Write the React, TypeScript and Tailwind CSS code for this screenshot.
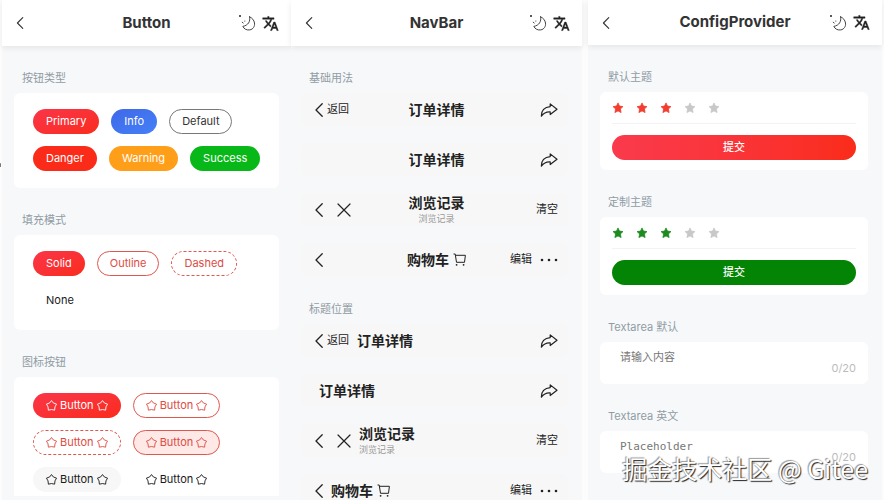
import type { ReactNode } from "react";

const STAR_PATH =
  "M12 1.8 15 8.200 22 9.100 16.900 14 18.200 21.200 12 17.800 5.800 21.200 7.100 14 2 9.100 9 8.200Z";

function BackIcon({ className }: { className: string }) {
  return (
    <svg viewBox="0 0 8 14" className={className} fill="none" stroke="currentColor" strokeWidth="1.3" strokeLinecap="round" strokeLinejoin="round">
      <path d="M7.2 0.8 1 7l6.2 6.2" />
    </svg>
  );
}

function MoonIcon() {
  return (
    <svg viewBox="0 0 18 18" className="size-[18px]" fill="none" stroke="#444" strokeWidth="1" strokeLinecap="round" strokeLinejoin="round">
      <path d="M11.600 2.800c1 4.600-1.400 8.600-6.800 9.600 1.300 2.600 3.900 4 7 3.500 3.300-.6 5.200-3.600 4.700-6.900-.4-2.700-2.300-5.200-4.900-6.200Z" />
      <circle cx="2" cy="2" r="1" fill="#222" stroke="none" />
      <path d="M6.800 7v.2M4.200 8.200l1 .8" />
    </svg>
  );
}

function TranslateIcon() {
  return (
    <svg viewBox="0 0 24 24" className="size-[17px]" fill="#222" stroke="#222" strokeWidth=".6">
      <path d="m12.870 15.070-2.540-2.510.03-.03A17.520 17.520 0 0 0 14.070 6H17V4h-7V2H8v2H1v2h11.170C11.500 7.920 10.440 9.750 9 11.350 8.070 10.320 7.300 9.190 6.690 8h-2c.73 1.630 1.730 3.170 2.980 4.560l-5.090 5.020L4 19l5-5 3.110 3.110.76-2.040zM18.500 10h-2L12 22h2l1.120-3h4.750L21 22h2l-4.500-12zm-2.620 7 1.620-4.330L19.120 17h-3.240z" />
    </svg>
  );
}

function ShareIcon() {
  return (
    <svg viewBox="0 0 18 14" className="h-3.5 w-[18px]" fill="none" stroke="currentColor" strokeWidth="1.2" strokeLinejoin="round">
      <path d="M10.200 .9 17 6.200 10.200 11.500V8.900C6.600 8.600 3.800 9.800 1.400 13.200 1.200 7.800 4.400 4 10.200 3.600Z" />
    </svg>
  );
}

function CloseIcon() {
  return (
    <svg viewBox="0 0 14 14" className="size-3.5" fill="none" stroke="currentColor" strokeWidth="1.2" strokeLinecap="round">
      <path d="m1 1 12 12M13 1 1 13" />
    </svg>
  );
}

function CartIcon() {
  return (
    <svg viewBox="0 0 13 13" className="size-[13px]" fill="none" stroke="currentColor" strokeWidth="1" strokeLinejoin="round">
      <path d="M.5 1h1.700l1.300 8.300h8L12.400 2.300H2.600" />
      <circle cx="3.600" cy="11.800" r=".9" fill="currentColor" stroke="none" />
      <circle cx="10.600" cy="11.800" r=".9" fill="currentColor" stroke="none" />
    </svg>
  );
}

function MoreIcon() {
  return (
    <svg viewBox="0 0 18 4" className="h-1 w-[18px]" fill="currentColor">
      <circle cx="2" cy="2" r="1.300" />
      <circle cx="9" cy="2" r="1.300" />
      <circle cx="16" cy="2" r="1.300" />
    </svg>
  );
}

// wide-bodied star, closer to a pentagon than a sharp five-pointer
function StarOutline() {
  return (
    <svg viewBox="0 0 12 12" className="size-[11px]" fill="none" stroke="currentColor" strokeWidth="1" strokeLinejoin="round">
      <path d="M6 .6 8 3.200 11.500 4.500 9.800 7.500 9.400 11.100 6 10.400 2.600 11.100 2.200 7.500 .5 4.500 4 3.200Z" />
    </svg>
  );
}

type PanelProps = { title: string; headerClass: string; bodyClass: string; children: ReactNode };

function Panel({ title, headerClass, bodyClass, children }: PanelProps) {
  return (
    <section className="min-w-0 bg-[#f7f8fa]">
      <header className={`grid grid-cols-[1fr_auto_1fr] items-center bg-white pr-3 pl-3 shadow-[0_2px_6px_rgba(0,0,0,0.08)] ${headerClass}`}>
        <button type="button" aria-label="Back" className="justify-self-start p-0.5 text-[#333]">
          <BackIcon className="h-3 w-2" />
        </button>
        <h1 className="text-[15px] font-bold text-[#333]">{title}</h1>
        <div className="flex items-center gap-1.5 justify-self-end">
          <button type="button" aria-label="Dark mode">
            <MoonIcon />
          </button>
          <button type="button" aria-label="Language">
            <TranslateIcon />
          </button>
        </div>
      </header>
      <div className={bodyClass}>{children}</div>
    </section>
  );
}

function Label({ children }: { children: ReactNode }) {
  return <h2 className="px-2 pt-[23px] pb-1.5 text-[11px] leading-[18px] text-[#909ca4]">{children}</h2>;
}

const pill = "flex h-[25px] items-center gap-[3px] rounded-full text-[11px] leading-none";
const redGradient = "px-[13px] bg-linear-to-br from-[#fa3547] to-[#fa2c19] text-white";
const redOutline = "px-3 border border-[#e0574f] text-[#dd4b43]";

function Pill({ className, children }: { className: string; children: ReactNode }) {
  return (
    <button type="button" className={`${pill} ${className}`}>
      {children}
    </button>
  );
}

function IconPill({ className }: { className: string }) {
  return (
    <button type="button" className={`${pill} ${className}`}>
      <StarOutline />
      Button
      <StarOutline />
    </button>
  );
}

function ButtonCard({ children }: { children: ReactNode }) {
  return <div className="flex flex-wrap gap-3 rounded-md bg-white pt-4 pr-3 pb-[17px] pl-[19px]">{children}</div>;
}

function ButtonPanel() {
  return (
    <Panel title="Button" headerClass="h-[46px]" bodyClass="px-3">
      <Label>按钮类型</Label>
      <ButtonCard>
        <Pill className={redGradient}>Primary</Pill>
        <Pill className="bg-linear-to-br from-[#4068e8] to-[#4480f8] px-[13px] text-white">Info</Pill>
        <Pill className="border border-[#777] px-3 text-[#333]">Default</Pill>
        <Pill className="bg-[#fa2c19] px-[13px] text-white">Danger</Pill>
        <Pill className="bg-[#ff9e18] px-[13px] text-white">Warning</Pill>
        <Pill className="bg-[#08b818] px-[13px] text-white">Success</Pill>
      </ButtonCard>
      <Label>填充模式</Label>
      <ButtonCard>
        <Pill className={redGradient}>Solid</Pill>
        <Pill className={redOutline}>Outline</Pill>
        <Pill className={`${redOutline} border-dashed`}>Dashed</Pill>
        <Pill className="px-[13px] text-[#1a1a1a]">None</Pill>
      </ButtonCard>
      <Label>图标按钮</Label>
      <div className="grid grid-cols-[max-content_max-content] gap-3 rounded-t-md bg-white pt-4 pr-3 pb-1 pl-[19px]">
        <IconPill className={redGradient} />
        <IconPill className={redOutline} />
        <IconPill className={`${redOutline} border-dashed`} />
        <IconPill className={`${redOutline} bg-[#ffe9e7]`} />
        <IconPill className="bg-[#f7f7f7] px-[13px] text-[#1a1a1a]" />
        <IconPill className="px-[13px] text-[#1a1a1a]" />
      </div>
    </Panel>
  );
}

type BarProps = {
  back?: boolean;
  backText?: string;
  close?: boolean;
  title: string;
  subtitle?: string;
  cart?: boolean;
  right: "share" | "clear" | "edit";
  titleLeft?: boolean;
};

function Bar({ back, backText, close, title, subtitle, cart, right, titleLeft }: BarProps) {
  return (
    <div
      className={`grid h-[33px] items-center rounded-md bg-[#f7f7f7] pr-2.5 pl-3.5 text-[11px] text-[#222] ${
        titleLeft ? "grid-cols-[auto_1fr_auto]" : "grid-cols-[1fr_auto_1fr]"
      }`}
    >
      <div className="flex items-center">
        {back && (
          <button type="button" aria-label="Back" className="flex items-center gap-1">
            <BackIcon className="h-3.5 w-2" />
            {backText}
          </button>
        )}
        {close && (
          <button type="button" aria-label="Close" className="ml-3.5">
            <CloseIcon />
          </button>
        )}
      </div>
      <div className={titleLeft ? (back ? "pl-2" : "pl-1") : "text-center"}>
        <div className="flex items-center gap-1 text-sm leading-[18px] font-bold">
          {title}
          {cart && <CartIcon />}
        </div>
        {subtitle && <div className="text-[9px] leading-[13px] text-[#999]">{subtitle}</div>}
      </div>
      <div className="flex items-center gap-2 justify-self-end">
        {right === "share" && (
          <button type="button" aria-label="Share">
            <ShareIcon />
          </button>
        )}
        {right === "clear" && <button type="button">清空</button>}
        {right === "edit" && (
          <>
            <button type="button">编辑</button>
            <button type="button" aria-label="More">
              <MoreIcon />
            </button>
          </>
        )}
      </div>
    </div>
  );
}

function BarList({ titleLeft }: { titleLeft?: boolean }) {
  return (
    <div className="flex flex-col gap-[17px] pb-px">
      <Bar back backText="返回" title="订单详情" right="share" titleLeft={titleLeft} />
      <Bar title="订单详情" right="share" titleLeft={titleLeft} />
      <Bar back close title="浏览记录" subtitle="浏览记录" right="clear" titleLeft={titleLeft} />
      <Bar back title="购物车" cart right="edit" titleLeft={titleLeft} />
    </div>
  );
}

function NavBarPanel() {
  return (
    <Panel title="NavBar" headerClass="h-[46px]" bodyClass="pl-2.5 pr-3.5">
      <Label>基础用法</Label>
      <BarList />
      <Label>标题位置</Label>
      <BarList titleLeft />
    </Panel>
  );
}

function RateCard({ starClass, buttonClass }: { starClass: string; buttonClass: string }) {
  return (
    <div className="rounded-md bg-white px-3 pb-2.5">
      <div className="flex h-8 items-center gap-3 border-b border-[#f2f3f5]">
        {[1, 2, 3, 4, 5].map((n) => (
          <button key={n} type="button" aria-label={`${n}`} className={n <= 3 ? starClass : "text-[#c8c8c8]"}>
            <svg viewBox="0 0 24 24" className="size-3" fill="currentColor" stroke="currentColor" strokeWidth="1.500" strokeLinejoin="round">
              <path d={STAR_PATH} />
            </svg>
          </button>
        ))}
      </div>
      <button type="button" className={`mt-[11px] h-[25px] w-full rounded-full text-[11px] font-medium text-white ${buttonClass}`}>
        提交
      </button>
    </div>
  );
}

function TextareaCard({ placeholder, label }: { placeholder: string; label: string }) {
  return (
    <div className="flex h-[42px] items-end rounded-md bg-white pr-3 pb-2 pl-5">
      <textarea
        aria-label={label}
        placeholder={placeholder}
        className="h-[26px] min-w-0 flex-1 resize-none font-[DejaVu_Sans_Mono,Noto_Sans_CJK_SC,monospace] text-[11px] leading-4 outline-none placeholder:text-[#777]"
      />
      <span className="text-[11px] leading-4 text-[#bbb]">0/20</span>
    </div>
  );
}

function ConfigPanel() {
  return (
    <Panel title="ConfigProvider" headerClass="h-[45px]" bodyClass="pl-3 pr-3.5">
      <Label>默认主题</Label>
      <RateCard starClass="text-[#f23d30]" buttonClass="bg-linear-to-r from-[#fa3a4c] to-[#fa2c19]" />
      <Label>定制主题</Label>
      <RateCard starClass="text-[#1f8a1f]" buttonClass="bg-[#048404]" />
      <Label>Textarea 默认</Label>
      <TextareaCard label="Textarea 默认" placeholder="请输入内容" />
      <Label>Textarea 英文</Label>
      <TextareaCard label="Textarea 英文" placeholder="Placeholder" />
    </Panel>
  );
}

export default function App() {
  return (
    <main className="relative h-screen overflow-hidden bg-[#fcfcfd] pl-0.5 font-[Inter,Noto_Sans_CJK_SC,sans-serif]">
      <div className="grid min-h-full grid-cols-[289fr_291fr_6fr_294fr_2fr]">
        <ButtonPanel />
        <NavBarPanel />
        <div />
        <ConfigPanel />
      </div>
      <span className="absolute top-[163px] left-0 h-1 w-px rounded-full bg-[#777]" />
      <p className="absolute right-4 bottom-3 font-[Noto_Sans_CJK_SC,sans-serif] text-[25px] leading-10 text-white [text-shadow:1px_1px_1px_#222,-1px_-1px_1px_#999]">
        掘金技术社区 @ Gitee
      </p>
    </main>
  );
}
